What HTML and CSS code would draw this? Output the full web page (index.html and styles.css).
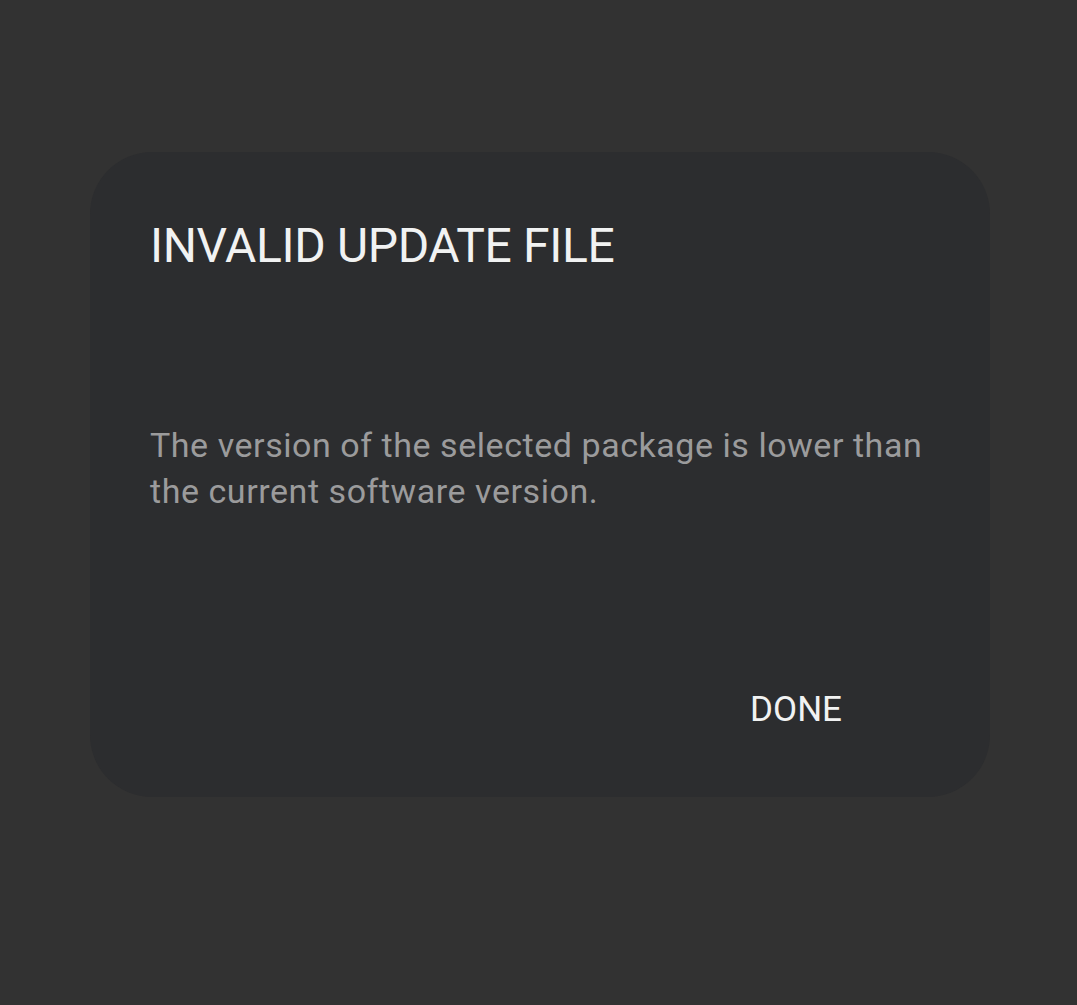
FILE: index.html
```html
<!DOCTYPE html>
<html lang="en">
<head>
  <meta charset="UTF-8" />
  <title>Invalid update file</title>
  <link rel="stylesheet" href="styles.css">
</head>
<body>

  <div class="dialog">
    <h1 class="dialog-title">INVALID UPDATE FILE</h1>
    <p class="dialog-text">The version of the selected package is lower than the current software version.</p>
    <div class="dialog-actions">
      <button class="done-btn">DONE</button>
    </div>
  </div>

</body>
</html>
```

FILE: styles.css
```css
body {
  margin: 0;
  height: 1005px;
  background-color: #323232;
  font-family: Roboto, 'Noto Sans', sans-serif;
  overflow: hidden;
}

.dialog {
  box-sizing: border-box;
  width: 900px;
  height: 645px;
  margin: 152px 0 0 90px;
  padding: 66px 60px 0 60px;
  background-color: #2c2d2f;
  border-radius: 62px;
  display: flex;
  flex-direction: column;
}

.dialog-title {
  margin: 0;
  font-size: 48px;
  line-height: 56px;
  font-weight: 400;
  letter-spacing: -0.35px;
  color: #f1f2f2;
}

.dialog-text {
  margin: 148px 0 0 0;
  font-size: 34px;
  line-height: 46px;
  letter-spacing: 0.55px;
  color: #9b9b9c;
}

.dialog-actions {
  display: flex;
  justify-content: flex-end;
  margin-top: 176px;
  padding-right: 88px;
}

.done-btn {
  background: none;
  border: none;
  padding: 0;
  font-family: inherit;
  font-size: 35px;
  line-height: 40px;
  color: #f1f2f2;
  cursor: pointer;
}
```
